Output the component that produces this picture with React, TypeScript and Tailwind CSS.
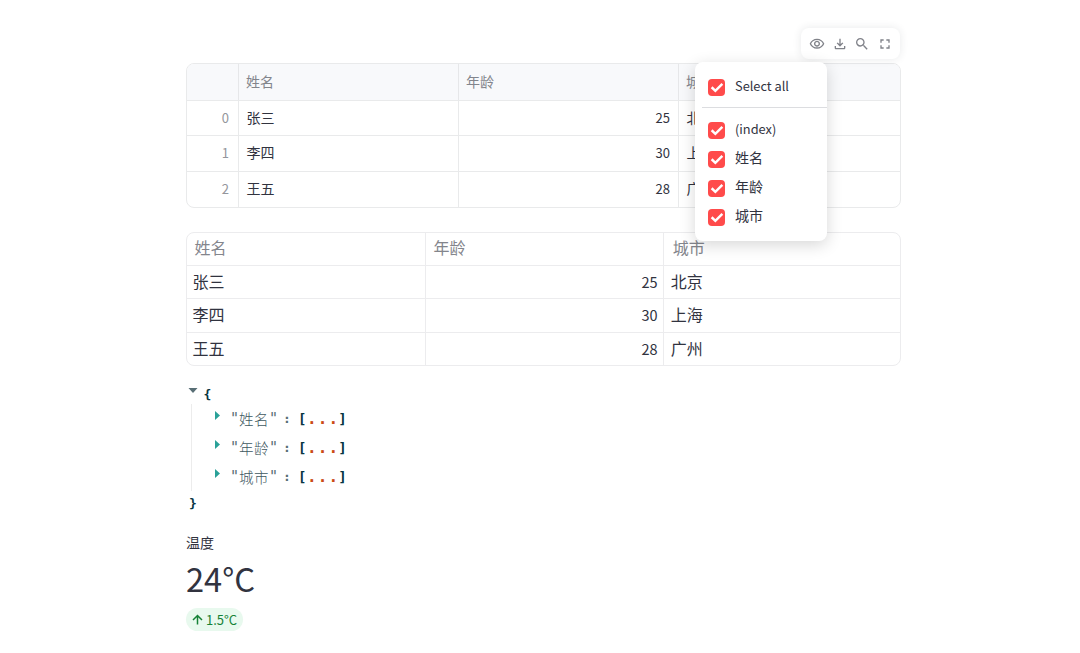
import type { ReactNode } from 'react';
import { MdOutlineVisibility, MdOutlineFileDownload, MdSearch, MdFullscreen } from 'react-icons/md';

const people = [
  { name: '张三', age: 25, city: '北京' },
  { name: '李四', age: 30, city: '上海' },
  { name: '王五', age: 28, city: '广州' },
];

function Toolbar() {
  return (
    <div className="absolute right-[0.5px] -top-[35px] flex h-[31px] w-[99px] items-center justify-center gap-[6.8px] rounded-lg bg-white pl-px text-[16px] text-[#808289] shadow-[0_0_8px_rgba(49,51,63,0.11)]">
      <MdOutlineVisibility />
      <MdOutlineFileDownload />
      <MdSearch />
      <MdFullscreen />
    </div>
  );
}

function CheckItem({ children, latin = false }: { children: ReactNode; latin?: boolean }) {
  return (
    <div className="flex h-[29.1px] items-center pl-[13px]">
      <span className="mt-[3px] flex size-[17px] items-center justify-center rounded-[4px] bg-[#ff4b4b]">
        <svg viewBox="0 0 17 13" className="h-[11px] w-[14px]" fill="none" stroke="white" strokeWidth="3">
          <path d="M2 6.2 6.5 10.5 15 2" />
        </svg>
      </span>
      <span className={latin ? 'ml-[10px] text-[12.8px] leading-[20px]' : '-mt-[3px] ml-[10px] text-[14px] leading-[20px]'}>
        {children}
      </span>
    </div>
  );
}

function ColumnMenu() {
  return (
    <div className="absolute left-[509px] -top-px z-10 h-[179px] w-[132px] rounded-lg bg-white pt-[9px] shadow-[0_4px_16px_rgba(0,0,0,0.16)]">
      <CheckItem latin>Select all</CheckItem>
      <div className="mb-[7px] ml-[7px] mt-[6.5px] h-px bg-[#dcdde0]" />
      <CheckItem latin>(index)</CheckItem>
      <CheckItem>姓名</CheckItem>
      <CheckItem>年龄</CheckItem>
      <CheckItem>城市</CheckItem>
    </div>
  );
}

function DataFrame() {
  return (
    <div className="relative">
      <div className="h-[145px] overflow-hidden rounded-lg border border-[#e9eaeb] text-[14px]">
        <div className="grid h-[36px] grid-cols-[52px_220px_220px_1fr] bg-[#f8f9fb] leading-[34px] text-[#83858c]">
          <div className="border-r border-[#e6e7e9]" />
          <div className="border-r border-[#e6e7e9] pl-[7px]">姓名</div>
          <div className="border-r border-[#e6e7e9] pl-[7px]">年龄</div>
          <div className="pl-[7px]">城市</div>
        </div>
        {people.map((p, i) => (
          <div key={p.name} className="grid h-[35.4px] grid-cols-[52px_220px_220px_1fr] border-t border-[#e9eaeb] leading-[32px] last:h-[37px]">
            <div className="border-r border-[#e9eaeb] pr-[9px] text-right text-[13px] leading-[33.5px] text-[#94969c]">{i}</div>
            <div className="border-r border-[#e9eaeb] pl-[7.5px]">{p.name}</div>
            <div className="border-r border-[#e9eaeb] pr-[8px] text-right text-[13px] leading-[33.5px]">{p.age}</div>
            <div className="pl-[7.5px]">{p.city}</div>
          </div>
        ))}
      </div>
      <Toolbar />
      <ColumnMenu />
    </div>
  );
}

function StaticTable() {
  return (
    <div className="mt-[24px] h-[134px] overflow-hidden rounded-lg border border-[#ececee] text-[16px]">
      <div className="grid h-[32px] grid-cols-[238.6px_238.6px_1fr] leading-[29px] text-[#83858c]">
        <div className="border-r border-[#ececee] pl-[7.5px]">姓名</div>
        <div className="border-r border-[#ececee] pl-[8px]">年龄</div>
        <div className="pl-[8.5px]">城市</div>
      </div>
      {people.map((p) => (
        <div key={p.name} className="grid h-[33.4px] grid-cols-[238.6px_238.6px_1fr] border-t border-[#ececee] leading-[30px]">
          <div className="border-r border-[#ececee] pl-[5.5px]">{p.name}</div>
          <div className="border-r border-[#ececee] pr-[5.6px] text-right text-[14.5px] leading-[31.5px]">{p.age}</div>
          <div className="pl-[6.5px]">{p.city}</div>
        </div>
      ))}
    </div>
  );
}

function JsonRow({ label }: { label: string }) {
  return (
    <div className="flex h-[29px] items-center">
      <svg viewBox="0 0 5 9" className="-mt-[6px] ml-[22px] h-[9px] w-[5px] fill-[#2aa198]">
        <path d="M0 0 5 4.5 0 9z" />
      </svg>
      <span className="ml-[10px] mt-px flex text-[15px] text-[#586e75]">
        <span className="w-[9px]">"</span>
        <span className="w-[30px] text-center font-['Noto_Sans_CJK_SC',sans-serif] text-[14.5px] font-light tracking-[0.4px] text-[#40585f]">{label}</span>
        <span className="w-[9px]">"</span>
      </span>
      <span className="ml-[5px] mt-px w-[8px] font-bold text-[#586e75]">:</span>
      <span className="ml-[7px] mt-px flex text-[14px] font-bold text-[#073642]">
        <span className="w-[9px]">[</span>
        <span className="text-[16px] tracking-[1.1px] text-[#cb4b16]">...</span>
        <span className="-ml-px">]</span>
      </span>
    </div>
  );
}

function JsonTree() {
  return (
    <div className="mt-[16px] h-[134px] font-['DejaVu_Sans_Mono',monospace] text-[13px] leading-[20px]">
      <div className="flex h-[22px] items-start">
        <svg viewBox="0 0 9 5" className="ml-[2px] mt-[6px] h-[5px] w-[10px] fill-[#586e75]">
          <path d="M0 0H9L4.500 5z" />
        </svg>
        <span className="ml-[5.5px] mt-[3px] font-bold text-[#073642]">{'{'}</span>
      </div>
      <div className="ml-[5px] h-[87px] border-l border-[#ececec] pl-px">
        <JsonRow label="姓名" />
        <JsonRow label="年龄" />
        <JsonRow label="城市" />
      </div>
      <div className="ml-[3px] mt-[3px] font-bold text-[#073642]">{'}'}</div>
    </div>
  );
}

function Metric() {
  return (
    <div className="mt-[15px]">
      <div className="text-[14px] leading-[22px]">温度</div>
      <div className="mt-[3px] text-[32.6px] leading-[43px]">24°C</div>
      <div className="mt-[9px] flex h-[23px] w-[57px] items-center rounded-full bg-[#e8f9ee] pl-[6px] text-[13px] leading-[24px] text-[#158237]">
        <svg viewBox="0 0 11 11" className="size-[11px]" fill="none" stroke="currentColor" strokeWidth="1.5">
          <path d="M5.5 10.500V1.500M1 6 5.500 1.500 10 6" />
        </svg>
        <span className="ml-[3px] whitespace-nowrap">1.5°C</span>
      </div>
    </div>
  );
}

export default function App() {
  return (
    <main className="h-[653px] overflow-hidden bg-white pl-[186px] pt-[63px] font-['Noto_Sans_CJK_SC',sans-serif] text-[#31333f]" lang="zh-CN">
      <div className="w-[714.5px]">
        <DataFrame />
        <StaticTable />
        <JsonTree />
        <Metric />
      </div>
    </main>
  );
}
